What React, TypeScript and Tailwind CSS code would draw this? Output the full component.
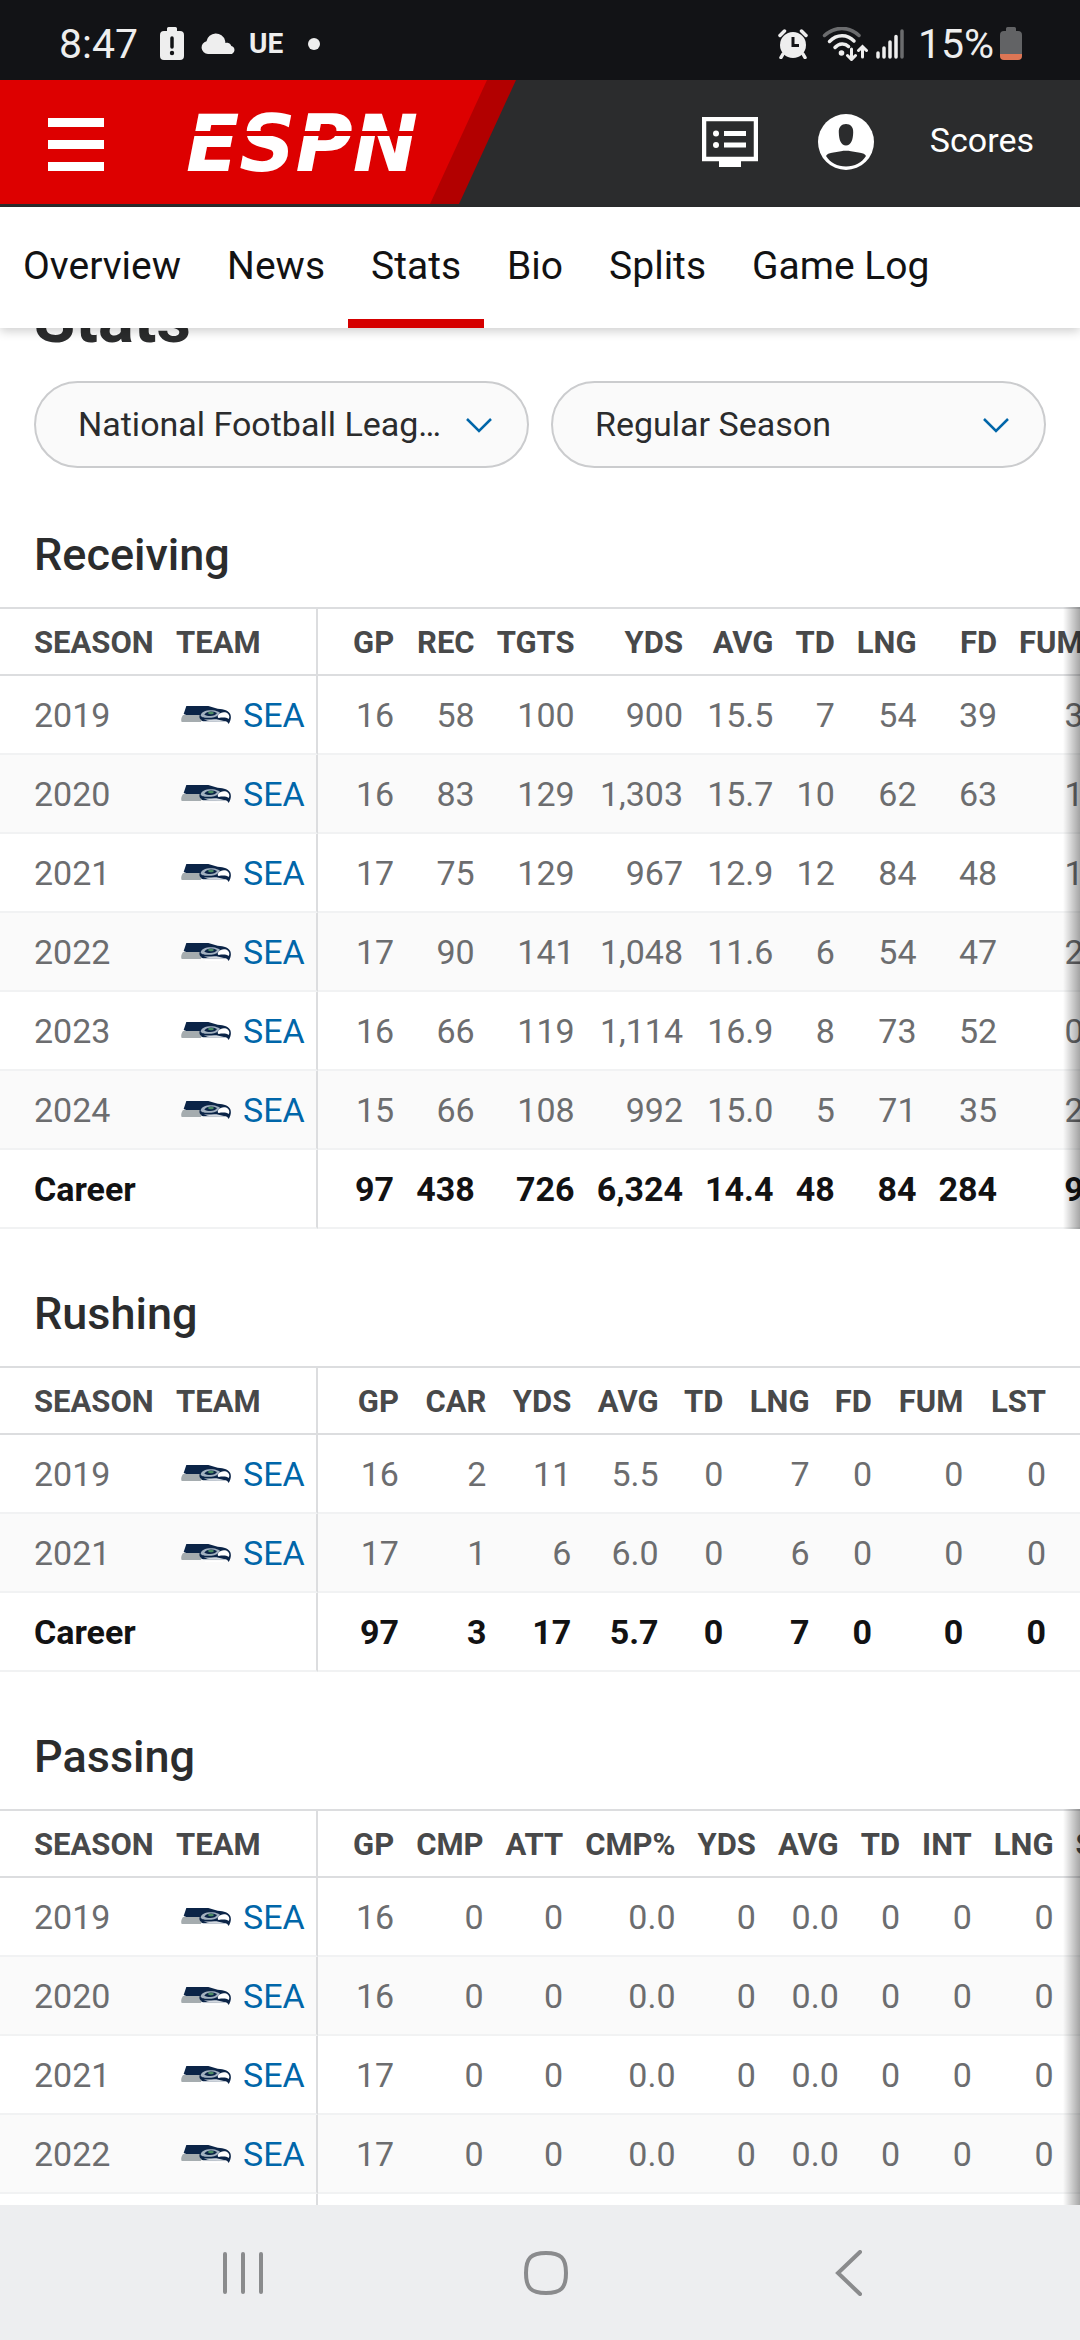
import { useState } from "react";

interface StatRow {
  season: string;
  values: string[];
}

interface StatGroup {
  title: string;
  columns: string[];
  rows: StatRow[];
  career?: string[];
  scrollable: boolean;
}

const tabs = ["Overview", "News", "Stats", "Bio", "Splits", "Game Log"];

const groups: StatGroup[] = [
  {
    title: "Receiving",
    columns: ["GP", "REC", "TGTS", "YDS", "AVG", "TD", "LNG", "FD", "FUM"],
    rows: [
      { season: "2019", values: ["16", "58", "100", "900", "15.5", "7", "54", "39", "3"] },
      { season: "2020", values: ["16", "83", "129", "1,303", "15.7", "10", "62", "63", "1"] },
      { season: "2021", values: ["17", "75", "129", "967", "12.9", "12", "84", "48", "1"] },
      { season: "2022", values: ["17", "90", "141", "1,048", "11.6", "6", "54", "47", "2"] },
      { season: "2023", values: ["16", "66", "119", "1,114", "16.9", "8", "73", "52", "0"] },
      { season: "2024", values: ["15", "66", "108", "992", "15.0", "5", "71", "35", "2"] },
    ],
    career: ["97", "438", "726", "6,324", "14.4", "48", "84", "284", "9"],
    scrollable: true,
  },
  {
    title: "Rushing",
    columns: ["GP", "CAR", "YDS", "AVG", "TD", "LNG", "FD", "FUM", "LST"],
    rows: [
      { season: "2019", values: ["16", "2", "11", "5.5", "0", "7", "0", "0", "0"] },
      { season: "2021", values: ["17", "1", "6", "6.0", "0", "6", "0", "0", "0"] },
    ],
    career: ["97", "3", "17", "5.7", "0", "7", "0", "0", "0"],
    scrollable: false,
  },
  {
    title: "Passing",
    columns: ["GP", "CMP", "ATT", "CMP%", "YDS", "AVG", "TD", "INT", "LNG", "SACK"],
    rows: [
      { season: "2019", values: ["16", "0", "0", "0.0", "0", "0.0", "0", "0", "0", "0"] },
      { season: "2020", values: ["16", "0", "0", "0.0", "0", "0.0", "0", "0", "0", "0"] },
      { season: "2021", values: ["17", "0", "0", "0.0", "0", "0.0", "0", "0", "0", "0"] },
      { season: "2022", values: ["17", "0", "0", "0.0", "0", "0.0", "0", "0", "0", "0"] },
      { season: "2023", values: ["16", "0", "0", "0.0", "0", "0.0", "0", "0", "0", "0"] },
    ],
    scrollable: true,
  },
];

function StatusBar() {
  return (
    <div className="flex h-20 shrink-0 items-center bg-[#121316] pt-2 pl-[59px] pr-[58px] text-[#eeeeee]">
      <span className="text-[41px] leading-none">8:47</span>

      <svg className="ml-[22px] h-[34px] w-6" viewBox="0 0 24 34" fill="currentColor">
        <path d="M7 1.5A1.5 1.5 0 0 1 8.500 0h7A1.500 1.500 0 0 1 17 1.500V4h3a4 4 0 0 1 4 4v21a4 4 0 0 1-4 4H4a4 4 0 0 1-4-4V8a4 4 0 0 1 4-4h3z" />
        <path d="M12 11v9" stroke="#121316" strokeWidth="3.500" strokeLinecap="round" />
        <circle cx="12" cy="26" r="2.200" fill="#121316" />
      </svg>

      <svg className="ml-[17px] h-[22px] w-9" viewBox="0 0 36 22" fill="currentColor">
        <path d="M7 21a6.500 6.500 0 0 1-1.500-12.800A9.500 9.500 0 0 1 24 7.500c.3.800.4 1.800.3 2.600 1.200-.5 2-.6 3-.2 1.800.6 2.700 1.800 3 3.200A4.200 4.200 0 0 1 31 21z" />
      </svg>

      <span className="ml-3 text-[28px] leading-none font-bold">UE</span>
      <span className="ml-[25px] h-3 w-3 rounded-full bg-[#eeeeee]" />

      <div className="ml-auto flex items-center">
        <svg className="h-[30px] w-[30px]" viewBox="0 0 30 30" fill="currentColor">
          <circle cx="15" cy="16" r="13" />
          <path
            d="M2 6.500 6.500 2M28 6.500 23.500 2M5 25l-2 3.500M25 25l2 3.500"
            stroke="currentColor"
            strokeWidth="3.500"
            strokeLinecap="round"
          />
          <path d="M15 8v8.500h6" fill="none" stroke="#121316" strokeWidth="3" />
        </svg>

        <svg
          className="ml-[14px] h-[34px] w-[46px]"
          viewBox="0 0 46 34"
          fill="none"
          stroke="currentColor"
          strokeWidth="3.500"
          strokeLinecap="round"
        >
          <path d="M2.500 8.500C13-1 27-1 37 8.500" stroke="#6b6c6e" />
          <path d="M7.500 14.500C15 7 25 7 32 14" />
          <path d="M13 20.500C17 16 23 16 26.500 19.500" />
          <circle cx="19.500" cy="26" r="2.800" fill="currentColor" stroke="none" />
          <path d="M29.500 22v10M25.500 28.500l4 4 4-4M40.500 30V20M36.500 23.500l4-4 4 4" strokeWidth="3" />
        </svg>

        <svg className="ml-2 h-[32px] w-[28px]" viewBox="0 0 28 32" strokeWidth="3.500" strokeLinecap="round">
          <path d="M2 29v-4M8 29v-9M14 29v-15M20 29V8.500" stroke="currentColor" />
          <path d="M26 29V3" stroke="#6b6c6e" />
        </svg>

        <span className="ml-[14px] text-[41px] leading-none">15%</span>

        <svg className="ml-[6px] h-[34px] w-[22px]" viewBox="0 0 22 34">
          <path d="M6 1.500A1.500 1.500 0 0 1 7.500 0h7A1.500 1.500 0 0 1 16 1.500V4h2a4 4 0 0 1 4 4v20H0V8a4 4 0 0 1 4-4h2z" fill="#626365" />
          <path d="M0 27h22v2a4 4 0 0 1-4 4H4a4 4 0 0 1-4-4z" fill="#dd7655" />
        </svg>
      </div>
    </div>
  );
}

function SiteHeader() {
  return (
    <header className="relative flex h-[127px] shrink-0 items-center border-b-[3px] border-[#2b2c2d] bg-[#2b2c2d] pr-[46px] pl-12 text-white">
      <svg className="absolute top-0 left-0 h-[124px] w-[516px]" viewBox="0 0 516 124" aria-hidden="true">
        <path d="M0 0h516l-57 124H0z" fill="#b20000" />
        <path d="M0 0h487l-57 124H0z" fill="#dd0000" />
      </svg>

      <button type="button" aria-label="Menu" className="relative flex w-14 flex-col gap-[13px] pt-1">
        <span className="h-[9px] bg-white" />
        <span className="h-[9px] bg-white" />
        <span className="h-[9px] bg-white" />
      </button>

      <a
        href="#home"
        className="relative ml-[82px] block pt-1 font-['DejaVu_Sans',sans-serif] text-[78px] leading-[80px] font-bold italic"
      >
        ESPN
        <span className="absolute top-[31px] left-0 z-10 block h-[5px] w-full bg-[#dd0000]" />
      </a>

      <div className="relative ml-auto flex items-center gap-14">
        <button type="button" aria-label="Watch" className="mr-1">
          <svg className="h-[50px] w-14" viewBox="0 0 56 50" fill="currentColor">
            <path d="M2 2h52v40H2z" fill="none" stroke="currentColor" strokeWidth="4.500" />
            <path d="M17 43h22v7H17zM22 14h22v5H22zM22 25.500h22v5H22z" />
            <circle cx="14" cy="16.500" r="3" />
            <circle cx="14" cy="28" r="3" />
          </svg>
        </button>

        <button type="button" aria-label="Profile">
          <svg className="h-14 w-14" viewBox="0 0 56 56">
            <circle cx="28" cy="28" r="28" fill="#ffffff" />
            <path d="M28 10c4.500 0 7.500 3 7.200 8.500C35 26 33 31.500 28 31.500S21 26 20.800 18.500C20.500 13 23.500 10 28 10z" fill="#2b2c2d" />
            <path d="M8 42c1-2 3-2.500 6-3.200l9-1.600c3-.6 7-.6 10 0l9 1.600c3 .7 5 1.200 6 3.200C44 48.500 36.500 52.500 28 52.500S12 48.500 8 42z" fill="#2b2c2d" />
          </svg>
        </button>

        <a href="#scores" className="pb-1 text-[34px] leading-10">
          Scores
        </a>
      </div>
    </header>
  );
}

function SeahawksLogo() {
  return (
    <svg className="h-[18px] w-[50px] shrink-0" viewBox="0 0 150 54" aria-hidden="true">
      <path d="M16 0h66l28 8c20 2 33 5 38 17 3 8 2 18-5 29-3-5-6-7-10-8H66L8 24z" fill="#0b2447" />
      <path d="M6 27h50c-2 7 0 12 6 15l-2 6H2c-3-5-1-14 4-21z" fill="#a5acaf" />
      <path d="M59 30c0-12 16-18 36-17 10 1 16 4 22 7-4 9-14 14-26 15-12 0-22 1-26-1z" fill="#a3b1c0" />
      <path d="M70 26c6-10 24-12 38-5-4 10-26 12-38 5z" fill="#0b2447" />
      <path d="M80 20c6-4 14-4 19 0-2 6-14 7-19 0z" fill="#4a8a63" />
      <path d="M112 27c6-9 21-11 29-4 5 5 5 11 2 16-7-5-18-5-30-3-4-2-3-6-1-9z" fill="#ffffff" />
      <path d="M68 39c14 4 30-2 45 2l16 4c-12 2-20-1-31 0-10 1-20 0-30-6z" fill="#d3d9e0" />
      <path d="M72 52h54" stroke="#ffffff" strokeWidth="4" />
    </svg>
  );
}

function StatTable({ group }: { group: StatGroup }) {
  return (
    <section className="pt-[58px]">
      <h2 className="mb-[25px] px-[34px] text-[45px] leading-[54px] font-medium text-[#2b2c2d]">
        {group.title}
      </h2>

      <div className="relative flex text-[34px] leading-10 text-[#6c6d6f]">
        {/* Pinned season and team columns */}
        <table className="w-[318px] shrink-0 table-fixed border-separate border-spacing-0">
          <thead>
            <tr className="h-[69px] text-left text-[31px] text-[#48494a]">
              <th className="w-[164px] border-y-2 border-[#dcdddf] p-0 pt-[2px] pl-[34px] font-bold">SEASON</th>
              <th className="border-y-2 border-r-2 border-[#dcdddf] p-0 pt-[2px] pl-3 font-bold">TEAM</th>
            </tr>
          </thead>
          <tbody>
            {group.rows.map((row) => (
              <tr key={row.season} className="h-[79px] even:bg-[#fafafa]">
                <td className="border-b-2 border-[#f1f2f3] p-0 pl-[34px]">{row.season}</td>
                <td className="border-r-2 border-b-2 border-r-[#dcdddf] border-b-[#f1f2f3] p-0 pl-[17px]">
                  <a href="#sea" className="flex items-center gap-3 text-[#0066a9]">
                    <SeahawksLogo />
                    SEA
                  </a>
                </td>
              </tr>
            ))}
            {group.career && (
              <tr className="h-[79px] font-bold text-[#121213]">
                <td
                  colSpan={2}
                  className="border-r-2 border-b-2 border-r-[#dcdddf] border-b-[#f1f2f3] p-0 pl-[34px]"
                >
                  Career
                </td>
              </tr>
            )}
          </tbody>
        </table>

        {/* Stat columns */}
        <div className="min-w-0 flex-1 overflow-hidden">
          <table className="w-max min-w-full border-separate border-spacing-0 text-right">
            <thead>
              <tr className="h-[69px] text-[31px] text-[#48494a]">
                {group.columns.map((column) => (
                  <th
                    key={column}
                    className="border-y-2 border-[#dcdddf] px-[11px] pt-[2px] pb-0 font-bold first:pl-[35px] last:pr-[34px]"
                  >
                    {column}
                  </th>
                ))}
              </tr>
            </thead>
            <tbody>
              {group.rows.map((row) => (
                <tr key={row.season} className="h-[79px] even:bg-[#fafafa]">
                  {row.values.map((value, index) => (
                    <td
                      key={index}
                      className="border-b-2 border-[#f1f2f3] px-[11px] py-0 first:pl-[35px] last:pr-[34px]"
                    >
                      {value}
                    </td>
                  ))}
                </tr>
              ))}
              {group.career && (
                <tr className="h-[79px] font-bold text-[#121213]">
                  {group.career.map((value, index) => (
                    <td
                      key={index}
                      className="border-b-2 border-[#f1f2f3] px-[11px] py-0 first:pl-[35px] last:pr-[34px]"
                    >
                      {value}
                    </td>
                  ))}
                </tr>
              )}
            </tbody>
          </table>
        </div>

        {group.scrollable && (
          <div className="pointer-events-none absolute inset-y-0 right-0 w-[17px] bg-gradient-to-r from-transparent to-black/35" />
        )}
      </div>
    </section>
  );
}

function FilterSelect({ label, options }: { label: string; options: string[] }) {
  return (
    <label className="relative min-w-0 flex-1">
      <span className="sr-only">{label}</span>
      <select className="h-[87px] w-full appearance-none truncate rounded-full border-2 border-[#cbccce] bg-[#fafafa] pr-[78px] pl-[42px] text-[34px] text-[#2b2c2d]">
        {options.map((option) => (
          <option key={option}>{option}</option>
        ))}
      </select>
      <svg
        className="pointer-events-none absolute top-[36px] right-[37px] h-4 w-[26px]"
        viewBox="0 0 26 16"
        fill="none"
        stroke="#0066a9"
        strokeWidth="2.500"
      >
        <path d="M1 2l12 12L25 2" />
      </svg>
    </label>
  );
}

function SystemNav() {
  return (
    <div className="grid h-[135px] shrink-0 grid-cols-3 items-center justify-items-center bg-[#edeef0] pr-20 pl-[92px] text-[#8a8b8d]">
      <button type="button" aria-label="Recent apps">
        <svg className="h-[46px] w-[46px]" viewBox="0 0 46 46" stroke="currentColor" strokeWidth="4" strokeLinecap="round">
          <path d="M5 4v38M23 4v38M41 4v38" />
        </svg>
      </button>
      <button type="button" aria-label="Home">
        <svg className="h-[46px] w-[46px]" viewBox="0 0 46 46" fill="none" stroke="currentColor" strokeWidth="4">
          <path d="M23 3c15 0 20 5 20 20s-5 20-20 20S3 38 3 23 8 3 23 3z" />
        </svg>
      </button>
      <button type="button" aria-label="Back">
        <svg
          className="h-[46px] w-[46px]"
          viewBox="0 0 46 46"
          fill="none"
          stroke="currentColor"
          strokeWidth="4"
          strokeLinecap="round"
        >
          <path d="M34 2 12 23l22 21" />
        </svg>
      </button>
    </div>
  );
}

function App() {
  const [activeTab, setActiveTab] = useState("Stats");

  return (
    <div className="flex h-screen flex-col overflow-hidden bg-white font-[Roboto,sans-serif]">
      <StatusBar />
      <SiteHeader />

      <nav className="relative z-10 flex h-[121px] shrink-0 bg-white text-[39px] text-[#121213] shadow-[0_3px_10px_rgba(0,0,0,0.2)]">
        {tabs.map((tab) => (
          <a
            key={tab}
            href={`#${tab}`}
            onClick={() => setActiveTab(tab)}
            className={`flex items-center border-t-[6px] border-b-[9px] border-t-transparent px-[23px] ${
              tab === activeTab ? "border-b-[#d50000]" : "border-b-transparent"
            }`}
          >
            {tab}
          </a>
        ))}
      </nav>

      <main className="min-h-0 flex-1 overflow-hidden">
        <h1 className="-mt-[49px] px-[34px] text-[67px] leading-[80px] font-bold text-[#2b2c2d]">
          Stats
        </h1>

        <div className="mt-[22px] mb-[2px] flex gap-[22px] px-[34px]">
          <FilterSelect label="League" options={["National Football League"]} />
          <FilterSelect label="Season type" options={["Regular Season", "Postseason"]} />
        </div>

        {groups.map((group) => (
          <StatTable key={group.title} group={group} />
        ))}
      </main>

      <SystemNav />
    </div>
  );
}

export default App;
